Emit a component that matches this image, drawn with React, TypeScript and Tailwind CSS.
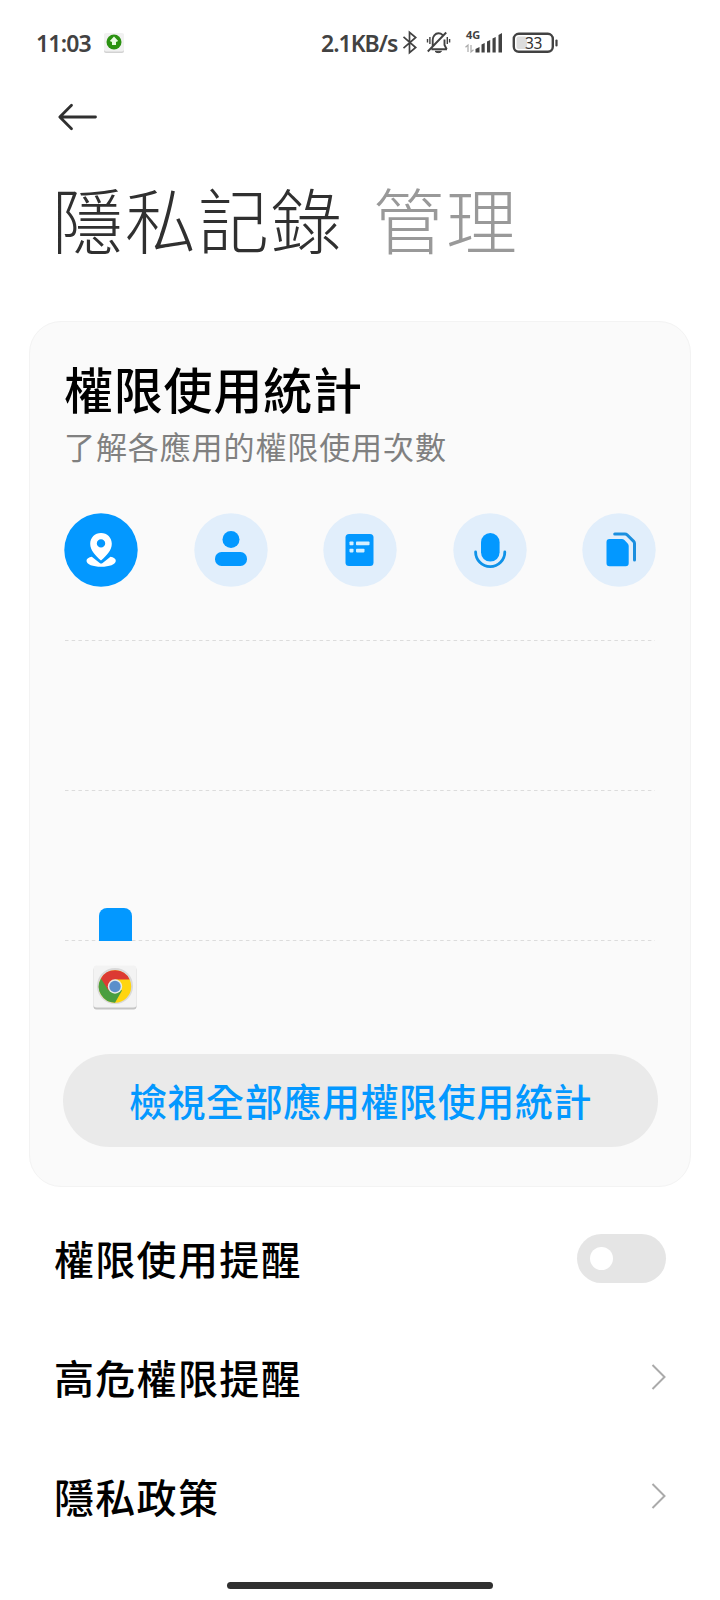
import type { ReactNode } from "react";

type Permission = {
  id: string;
  label: string;
  active?: boolean;
  icon: ReactNode;
};

/** Icons are drawn on the full 74px circle */
const PERMISSIONS: Permission[] = [
  {
    id: "location",
    label: "位置",
    active: true,
    icon: (
      <>
        <path
          fill="#fff"
          fillRule="evenodd"
          d="M37 20c-6.200 0-10.800 4.700-10.800 10.700 0 6.500 5.300 12 10.800 16.800 5.500-4.800 10.800-10.300 10.800-16.800C47.800 24.700 43.200 20 37 20Zm0 6.200a4.200 4.200 0 1 1 0 8.400 4.200 4.200 0 0 1 0-8.400Z"
        />
        <path
          fill="#fff"
          d="M27.800 43.800c-3 .5-5.300 2-5.300 4 0 3.700 6.500 6 14.700 6s14.600-2.300 14.600-6c0-2-2.200-3.500-5.300-4L38.600 50c-.9.800-2 .8-2.900 0Z"
        />
      </>
    ),
  },
  {
    id: "contacts",
    label: "聯絡人",
    icon: (
      <>
        <circle cx="37" cy="26.500" r="8.500" />
        <rect x="21" y="39" width="32" height="14" rx="6.500" />
      </>
    ),
  },
  {
    id: "sms",
    label: "簡訊",
    icon: (
      <>
        <rect x="22.500" y="21" width="28" height="32" rx="3.500" />
        <g fill="#d5f0ff">
          <rect x="26.500" y="28.500" width="4" height="3.700" rx=".8" />
          <rect x="33" y="28.500" width="13.500" height="3.700" rx=".8" />
          <rect x="26.500" y="35.700" width="4" height="3.700" rx=".8" />
          <rect x="33" y="35.700" width="8.500" height="3.700" rx=".8" />
        </g>
      </>
    ),
  },
  {
    id: "microphone",
    label: "麥克風",
    icon: (
      <>
        <rect x="28" y="20" width="18.600" height="28.600" rx="9.300" />
        <path
          d="M22.600 39c0 8 6.400 14.600 14.600 14.600S51.800 47 51.800 39"
          fill="none"
          stroke="#0f92e8"
          strokeWidth="2.800"
          strokeLinecap="round"
        />
      </>
    ),
  },
  {
    id: "files",
    label: "檔案",
    icon: (
      <>
        <path d="M27.500 26h12.300c1 0 1.900.4 2.600 1.100l3.300 3.300c.7.7 1 1.500 1 2.500v17.300a3 3 0 0 1-3 3H27.500a3 3 0 0 1-3-3V29a3 3 0 0 1 3-3Z" />
        <path
          d="M32.700 20.900h10.200c.8 0 1.500.3 2.100.9l6.700 6.600c.5.500.8 1.200.8 2v16.500"
          fill="none"
          stroke="#1b8fdf"
          strokeWidth="3"
          strokeLinecap="round"
        />
      </>
    ),
  },
];

const LINKS = ["高危權限提醒", "隱私政策"];

function StatusBar() {
  return (
    <header className="flex h-[86px] items-center pl-9 text-[#424242]">
      <span className="w-[68px] whitespace-nowrap font-['Noto_Sans'] text-[23px] font-semibold tracking-[-0.8px]">
        11:03
      </span>
      <svg width="20" height="20" viewBox="0 0 20 20">
        <rect y="1" width="20" height="19" rx="2" fill="#d2d2d2" />
        <rect width="20" height="18.500" rx="2" fill="#f1f1f1" />
        <circle cx="10" cy="9" r="7.500" fill="#2b9211" />
        <path d="M10 3.500l4.200 4.500-2.200 1V12H8V9L5.800 8Z" fill="#e9fbe3" />
      </svg>
      <span className="ml-[197px] w-[81px] whitespace-nowrap font-['Noto_Sans'] text-[23px] font-semibold tracking-[-1px]">
        2.1KB/s
      </span>
      <svg
        width="156"
        height="40"
        viewBox="402 23 156 40"
        fill="none"
        stroke="currentColor"
      >
        <path
          d="M403.500 36.800l12.200 10.700-6.200 5.200V32.300l6.200 5.200-12.200 10.700"
          strokeWidth="1.700"
        />
        {/* muted bell */}
        <path
          d="M431.500 49.300h15.500M432.700 46.500v-6.500c0-3.700 2.400-6.700 5.800-6.700 1.600 0 3 .6 4 1.600M444.500 39.500v5.500l2.200 4.300M427.800 51.500L446.200 32.500"
          strokeWidth="1.900"
        />
        <path
          d="M435 51.300h6.500c-.8 1.800-5.700 1.800-6.500 0Z"
          fill="currentColor"
          strokeWidth="1"
        />
        <path d="M429.900 37v7M427.500 39v3.500M447.300 37v7M449.600 39v3.500" strokeWidth="1.400" />
        <text
          x="466"
          y="39"
          fill="currentColor"
          stroke="none"
          fontFamily="Noto Sans"
          fontSize="11"
          fontWeight="700"
        >
          4G
        </text>
        <path d="M468 52v-7l-2.500 2.300M471 45v7l2.500-2.300" stroke="#aaa" strokeWidth="1.200" />
        <path
          d="M475.500 52.500v-3.500l4-2v5.500ZM481.500 52.500v-8l3.200-1.500v9.500ZM487 52.500v-11l3.200-1.500v12.500ZM492.500 52.500v-14l3.200-1.500v15.500ZM498.500 52.500v-17.500l3.500-2v19.500Z"
          fill="currentColor"
          stroke="none"
        />
        <rect x="513.800" y="33.800" width="39" height="18" rx="5" strokeWidth="2.400" />
        <rect x="516.500" y="36.500" width="10.500" height="12.500" rx="2" fill="#ddd" stroke="none" />
        <path d="M556.500 40.500v5" strokeWidth="2.200" strokeLinecap="round" />
        <text
          x="525"
          y="48.500"
          fill="#333"
          stroke="none"
          fontFamily="Noto Sans"
          fontSize="15.500"
          letterSpacing="-.4"
        >
          33
        </text>
      </svg>
    </header>
  );
}

function ChromeIcon() {
  return (
    <svg className="ml-[30px] mt-[24px]" width="44" height="45" viewBox="0 0 44 45">
      <rect x=".5" y="2" width="43" height="42.500" rx="3" fill="#c4c4c4" />
      <rect x=".5" y=".5" width="43" height="42" rx="3" fill="#f3f3f3" />
      <circle cx="22" cy="21" r="18" fill="#d9d9d9" />
      <circle cx="22" cy="21.500" r="16.200" fill="#ffd50f" />
      <path d="M22 21.500L7.970 13.400A16.200 16.200 0 0 0 22 37.700L29 25.500Z" fill="#4a9e3f" />
      <path d="M22 14.500H36.600A16.200 16.200 0 0 0 7.970 13.400L15.500 25.500Z" fill="#dc3a32" />
      <circle cx="22" cy="21.500" r="7.200" fill="#e9ebe8" />
      <circle cx="22" cy="21.500" r="5.700" fill="#5b8fcb" />
    </svg>
  );
}

function UsageCard() {
  return (
    <section className="mx-[29px] mt-[51px] h-[866px] rounded-[32px] border border-[#f3f3f3] bg-[#fafafa] px-[33px] pt-[30px]">
      <h2 className="ml-px h-[71px] whitespace-nowrap text-[49px] font-medium leading-[71px] tracking-[0.800px] text-black">
        權限使用統計
      </h2>
      <p className="ml-px mt-px h-11 whitespace-nowrap text-[31px] leading-[44px] tracking-[0.900px] text-[#808080]">
        了解各應用的權限使用次數
      </p>

      <div className="mt-[45px] flex justify-between pl-px pr-px">
        {PERMISSIONS.map((permission) => (
          <button key={permission.id} type="button" aria-label={permission.label}>
            <svg width="74" height="74" viewBox="0 0 74 74" fill="#0398ff">
              <circle cx="37" cy="37" r="36.700" fill={permission.active ? "#0398ff" : "#e1eefb"} />
              {permission.icon}
            </svg>
          </button>
        ))}
      </div>

      {/* Chart */}
      <div className="mt-[53px] flex h-[301px] flex-col justify-between px-0.5">
        <GridLine />
        <GridLine />
        <div className="relative">
          <GridLine />
          <div className="absolute bottom-0 left-[33.5px] h-[33px] w-[33.5px] rounded-t-lg bg-[#0398ff]" />
        </div>
      </div>
      <ChromeIcon />

      <button
        type="button"
        className="mt-[44px] block h-[93px] w-[595px] whitespace-nowrap rounded-full bg-[#eaeaea] pb-0.5 text-center text-[38px] font-medium tracking-[0.600px] text-[#0398ff]"
      >
        檢視全部應用權限使用統計
      </button>
    </section>
  );
}

function GridLine() {
  return (
    <svg className="block" width="590" height="1" viewBox="0 0 590 1">
      <path d="M0 .5h590" stroke="#dcdcdc" strokeDasharray="3.500 3.200" />
    </svg>
  );
}

export default function App() {
  return (
    <main className="h-[1600px] w-[720px] overflow-hidden bg-white font-['Noto_Sans_CJK_TC',sans-serif]">
      <StatusBar />

      <button type="button" aria-label="返回" className="ml-[57px] mt-[17px] block">
        <svg
          width="42"
          height="28"
          viewBox="0 0 42 28"
          fill="none"
          stroke="#303030"
          strokeWidth="2.800"
          strokeLinecap="round"
          strokeLinejoin="round"
        >
          <path d="M14.500 2.300L2.800 14l11.700 11.700M3 14h35.500" />
        </svg>
      </button>

      <nav className="ml-[52px] mt-[35px] flex h-[104px] gap-[29px] whitespace-nowrap text-[71px] font-light leading-[102px] tracking-[2px]">
        <span className="text-[#303030]">隱私記錄</span>
        <span className="text-[#999]">管理</span>
      </nav>

      <UsageCard />

      <div className="mt-[11px] pl-[54px] pr-[54px] text-[40px] font-medium tracking-[1.300px] text-black">
        <div className="flex h-[119px] items-center justify-between">
          <span className="mt-px">權限使用提醒</span>
          <button
            type="button"
            role="switch"
            aria-checked="false"
            className="mt-0.5 flex h-[49px] w-[89px] items-center rounded-full bg-[#e5e5e5] pl-[13px]"
          >
            <span className="size-[23px] rounded-full bg-white" />
          </button>
        </div>
        {LINKS.map((label) => (
          <a key={label} className="flex h-[119px] items-center justify-between">
            <span>{label}</span>
            <svg width="16" height="28" viewBox="0 0 16 28" fill="none" stroke="#aaa" strokeWidth="2">
              <path d="M2.500 2l12 12-12 12" />
            </svg>
          </a>
        ))}
      </div>

      <div className="mx-auto mt-[27px] h-[7px] w-[266px] rounded-full bg-[#303030]" />
    </main>
  );
}
